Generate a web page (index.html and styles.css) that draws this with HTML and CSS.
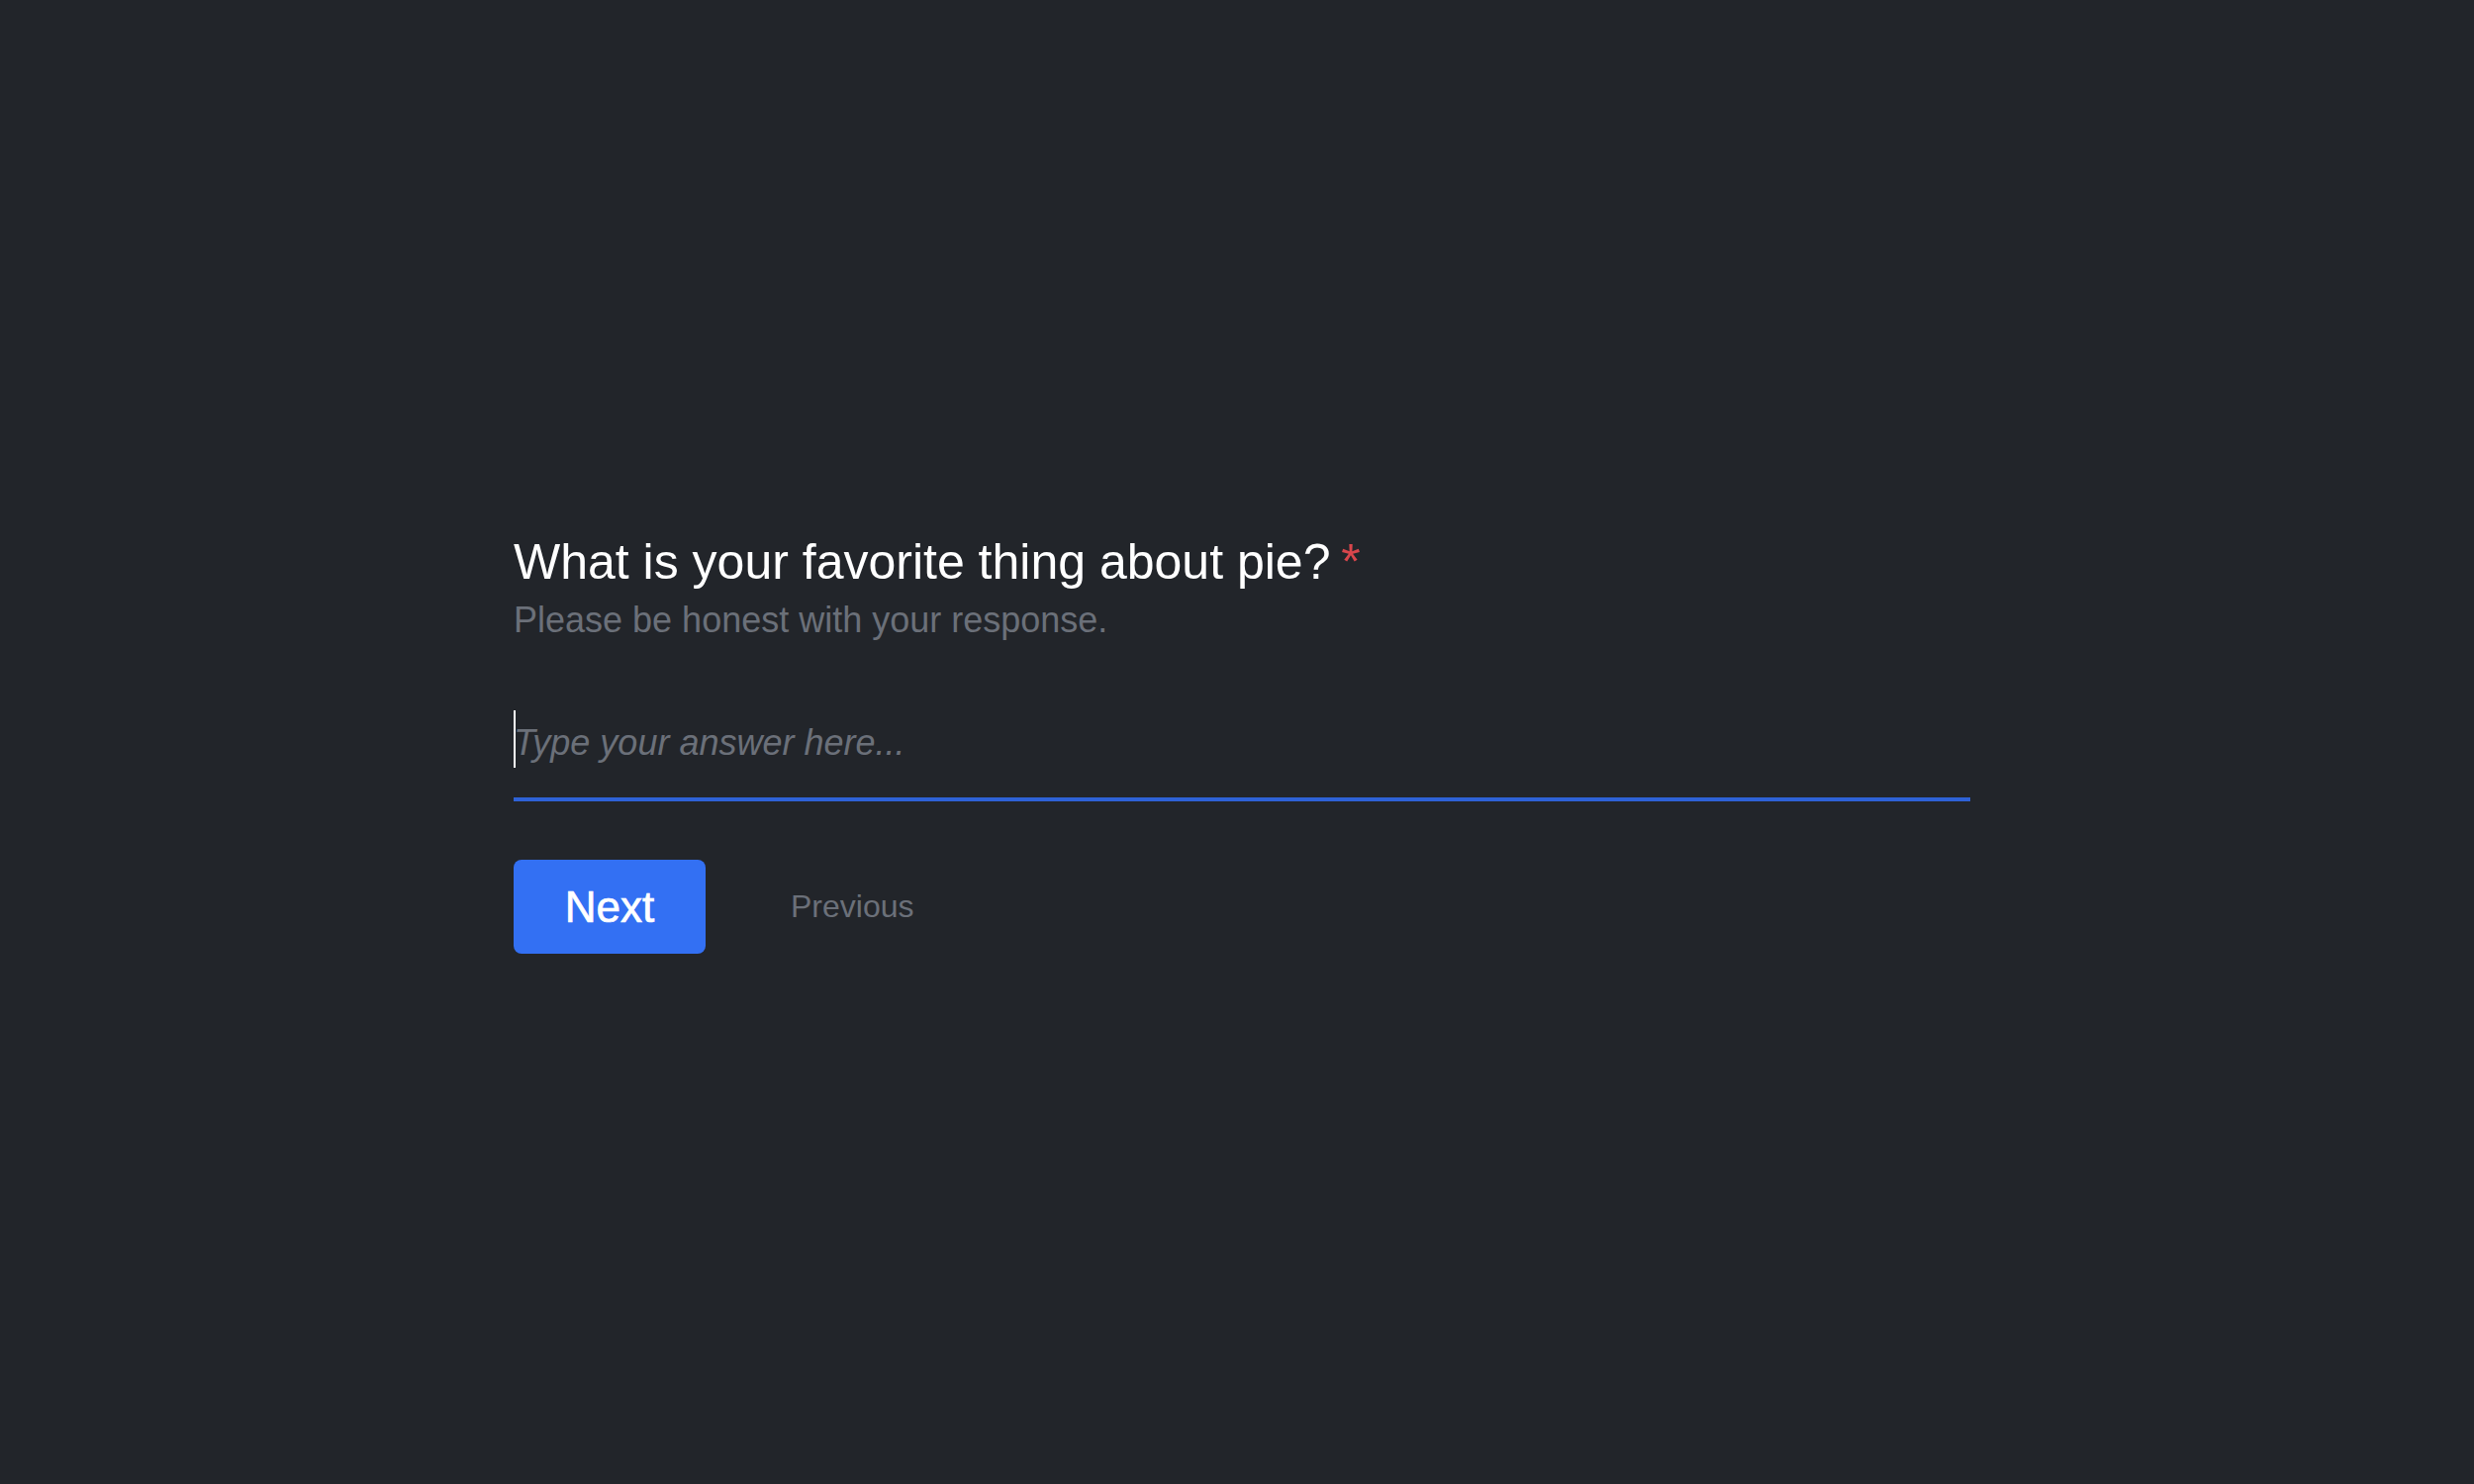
FILE: index.html
```html
<!DOCTYPE html>
<html lang="en">
<head>
<meta charset="utf-8">
<title>Question</title>
<link rel="stylesheet" href="styles.css">
</head>
<body>
<main class="page">
  <form class="question">
    <h1 class="title">What is your favorite thing about pie? <span class="required">*</span></h1>
    <p class="hint">Please be honest with your response.</p>
    <div class="answer">
      <span class="caret"></span>
      <input class="answer-input" type="text" placeholder="Type your answer here...">
    </div>
    <div class="actions">
      <button type="button" class="btn-next">Next</button>
      <button type="button" class="btn-prev">Previous</button>
    </div>
  </form>
</main>
</body>
</html>
```
FILE: styles.css
```css
html, body {
  margin: 0;
  padding: 0;
  background: #22252a;
  height: 100%;
}

body {
  font-family: "Liberation Sans", Arial, Helvetica, sans-serif;
}

.page {
  padding-top: 539px;
  padding-left: 519px;
}

.question {
  width: 1472px;
  display: flex;
  flex-direction: column;
}

.title {
  margin: 0;
  font-size: 50px;
  line-height: 59px;
  font-weight: 400;
  color: #ffffff;
}

.required {
  color: #d9464c;
  margin-left: -3px;
}

.hint {
  margin: 7px 0 0 0;
  font-size: 36px;
  line-height: 43px;
  color: #6b7079;
}

.answer {
  position: relative;
  margin-top: 73px;
}

.caret {
  position: absolute;
  left: 0;
  top: -3px;
  width: 2px;
  height: 58px;
  background: #ffffff;
}

.answer-input {
  display: block;
  box-sizing: content-box;
  width: 100%;
  height: 58px;
  margin: 0;
  padding: 1px 0 26px 0;
  border: none;
  border-bottom: 4px solid #2e62d6;
  background: transparent;
  outline: none;
  font-family: inherit;
  font-size: 36px;
  line-height: 58px;
  color: #ffffff;
  caret-color: transparent;
}

.answer-input::placeholder {
  color: #6b7079;
  font-style: italic;
  opacity: 1;
}

.actions {
  display: flex;
  align-items: center;
  gap: 86px;
  margin-top: 59px;
}

.btn-next {
  width: 194px;
  height: 95px;
  border: none;
  border-radius: 8px;
  background: #3370f3;
  color: #ffffff;
  font-family: inherit;
  font-size: 44px;
  font-weight: 400;
  -webkit-text-stroke: 0.7px #ffffff;
  display: flex;
  align-items: center;
  justify-content: center;
  padding: 0;
  cursor: pointer;
}

.btn-prev {
  border: none;
  background: transparent;
  padding: 0;
  font-family: inherit;
  font-size: 32px;
  color: #6b7079;
  cursor: pointer;
}
```
